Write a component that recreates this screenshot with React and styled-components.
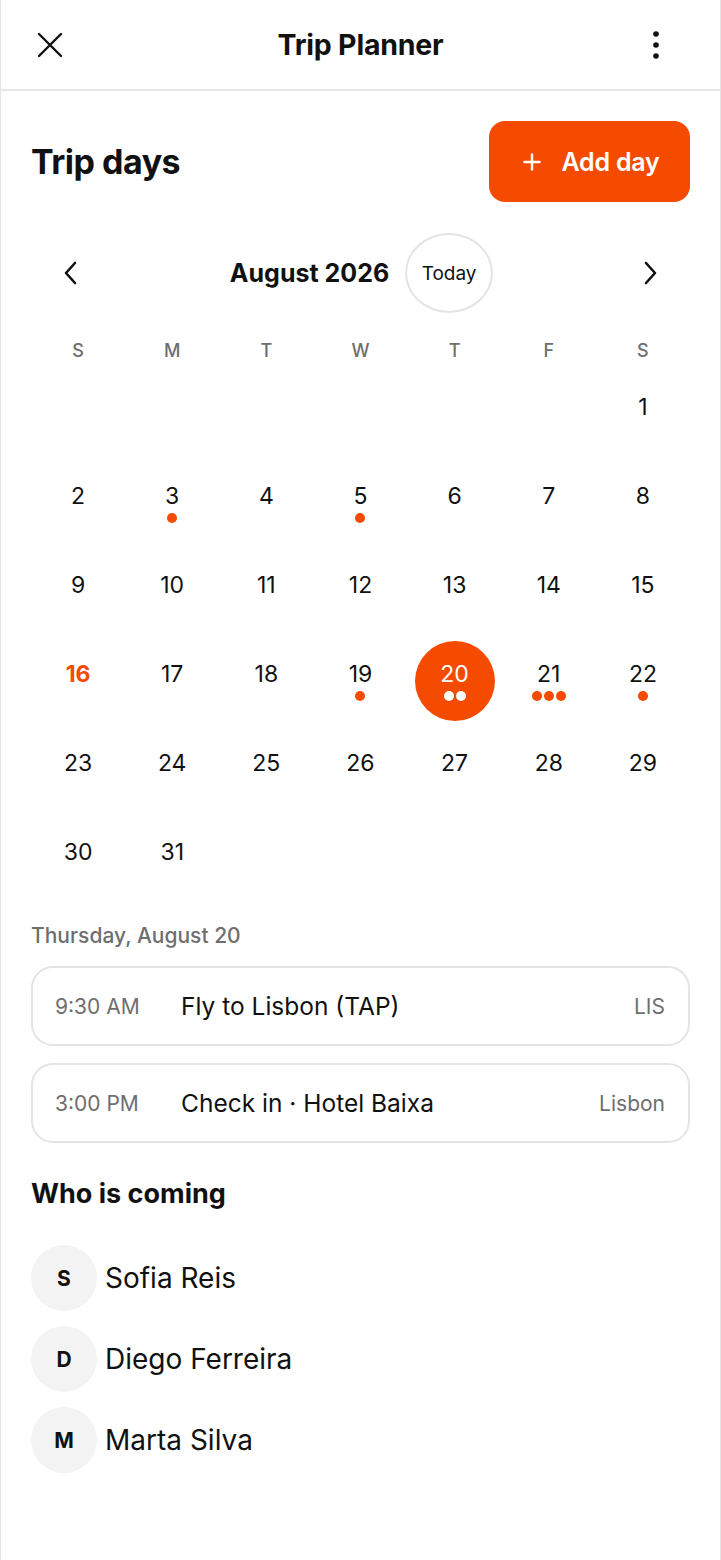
import React from 'react'
import styled, { createGlobalStyle } from 'styled-components'
import { Plus } from 'lucide-react'

const ORANGE = '#F44B00'

const GlobalStyle = createGlobalStyle`
  html, body {
    margin: 0;
    padding: 0;
    background: #fff;
  }
  body {
    font-family: Inter, "Noto Sans", "Liberation Sans", sans-serif;
    color: #111;
  }
`

const WEEKDAYS = ['S', 'M', 'T', 'W', 'T', 'F', 'S']
const EVENTS_PER_DAY = { 3: 1, 5: 1, 19: 1, 20: 2, 21: 3, 22: 1 }
const TODAY = 16
const SELECTED = 20

const schedule = [
  { time: '9:30 AM', title: 'Fly to Lisbon (TAP)', tag: 'LIS' },
  { time: '3:00 PM', title: 'Check in · Hotel Baixa', tag: 'Lisbon' },
]

const people = [
  { initial: 'S', name: 'Sofia Reis' },
  { initial: 'D', name: 'Diego Ferreira' },
  { initial: 'M', name: 'Marta Silva' },
]

const buildDays = () => {
  // August 2026 starts on a Saturday
  const cells = Array(6).fill(null)
  for (let d = 1; d <= 31; d++) cells.push(d)
  return cells
}

const CloseIcon = () => (
  <svg width="26" height="26" viewBox="0 0 26 26" fill="none" stroke="#111" strokeWidth="2.4" strokeLinecap="round">
    <path d="M2 2 L24 24 M24 2 L2 24" />
  </svg>
)

const KebabIcon = () => (
  <svg width="24" height="30" viewBox="0 0 24 30" fill="#111">
    <circle cx="12" cy="4" r="2.8" />
    <circle cx="12" cy="15" r="2.8" />
    <circle cx="12" cy="26" r="2.8" />
  </svg>
)

const Chevron = ({ dir }) => (
  <svg width="16" height="24" viewBox="0 0 16 24" fill="none" stroke="#111" strokeWidth="2.6" strokeLinecap="round" strokeLinejoin="round">
    <path d={dir === 'left' ? 'M12 2 L3 12 L12 22' : 'M4 2 L13 12 L4 22'} />
  </svg>
)

const App = () => {
  const days = buildDays()
  return (
    <>
      <GlobalStyle />
      <Page>
        <TopBar>
          <IconButton aria-label="Close"><CloseIcon /></IconButton>
          <TopTitle>Trip Planner</TopTitle>
          <IconButton aria-label="More" end><KebabIcon /></IconButton>
        </TopBar>

        <Content>
          <TitleRow>
            <PageTitle>Trip days</PageTitle>
            <AddButton>
              <Plus size={26} strokeWidth={2.2} />
              Add day
            </AddButton>
          </TitleRow>

          <MonthNav>
            <NavArrow aria-label="Previous month"><Chevron dir="left" /></NavArrow>
            <MonthGroup>
              <MonthLabel>August 2026</MonthLabel>
              <TodayButton>Today</TodayButton>
            </MonthGroup>
            <NavArrow aria-label="Next month"><Chevron dir="right" /></NavArrow>
          </MonthNav>

          <WeekRow>
            {WEEKDAYS.map((w, i) => <WeekLabel key={i}>{w}</WeekLabel>)}
          </WeekRow>

          <DayGrid>
            {days.map((d, i) => (
              <DayCell key={i}>
                {d && (
                  <DayCircle selected={d === SELECTED}>
                    <DayNumber today={d === TODAY} selected={d === SELECTED}>{d}</DayNumber>
                    <Dots>
                      {Array.from({ length: EVENTS_PER_DAY[d] || 0 }).map((_, j) => (
                        <Dot key={j} light={d === SELECTED} />
                      ))}
                    </Dots>
                  </DayCircle>
                )}
              </DayCell>
            ))}
          </DayGrid>

          <DayHeading>Thursday, August 20</DayHeading>
          <EventList>
            {schedule.map(ev => (
              <EventCard key={ev.time}>
                <EventTime>{ev.time}</EventTime>
                <EventTitle>{ev.title}</EventTitle>
                <EventTag>{ev.tag}</EventTag>
              </EventCard>
            ))}
          </EventList>

          <SectionTitle>Who is coming</SectionTitle>
          <PeopleList>
            {people.map(p => (
              <Person key={p.name}>
                <Avatar>{p.initial}</Avatar>
                <PersonName>{p.name}</PersonName>
              </Person>
            ))}
          </PeopleList>
        </Content>
      </Page>
    </>
  )
}

const Page = styled.div`
  box-sizing: border-box;
  width: 721px;
  min-height: 1560px;
  border-left: 1px solid #e4e4e4;
  border-right: 1px solid #e4e4e4;
  background: #fff;
`

const TopBar = styled.header`
  height: 89px;
  display: grid;
  grid-template-columns: 1fr auto 1fr;
  align-items: center;
  padding: 0 49px 0 34px;
  border-bottom: 2px solid #e6e6e6;
`

const IconButton = styled.button`
  justify-self: ${p => (p.end ? 'end' : 'start')};
  width: 30px;
  height: 30px;
  padding: 0;
  border: none;
  background: none;
  color: #111;
  display: flex;
  align-items: center;
  justify-content: center;
`

const TopTitle = styled.h1`
  margin: 0 0 0 15px;
  font-size: 28.5px;
  font-weight: 700;
  letter-spacing: -0.2px;
`

const Content = styled.main`
  padding: 30px 30px 40px;
`

const TitleRow = styled.div`
  display: flex;
  align-items: center;
  justify-content: space-between;
`

const PageTitle = styled.h2`
  margin: 0;
  font-size: 34px;
  font-weight: 700;
  letter-spacing: -0.5px;
`

const AddButton = styled.button`
  box-sizing: border-box;
  width: 201px;
  height: 81px;
  border: none;
  border-radius: 16px;
  background: ${ORANGE};
  color: #fff;
  font-family: inherit;
  font-size: 25px;
  font-weight: 600;
  display: flex;
  align-items: center;
  justify-content: center;
  gap: 16px;
  letter-spacing: -0.2px;
`

const MonthNav = styled.div`
  margin-top: 31px;
  height: 80px;
  display: flex;
  align-items: center;
  justify-content: space-between;
  padding: 0 32px 0 32px;
`

const NavArrow = styled.button`
  padding: 0;
  border: none;
  background: none;
  color: #111;
  display: flex;
`

const MonthGroup = styled.div`
  display: flex;
  align-items: center;
  gap: 16px;
  margin-left: 2px;
`

const MonthLabel = styled.span`
  font-size: 25px;
  font-weight: 700;
`

const TodayButton = styled.button`
  width: 88px;
  height: 80px;
  border-radius: 50%;
  border: 2px solid #e4e4e4;
  background: #fff;
  font-family: inherit;
  font-size: 19px;
  color: #111;
  padding: 0;
`

const WeekRow = styled.div`
  margin-top: 22px;
  display: grid;
  grid-template-columns: repeat(7, 1fr);
  height: 30px;
  align-items: center;
`

const WeekLabel = styled.span`
  text-align: center;
  font-size: 18px;
  font-weight: 500;
  color: #6e6e6e;
`

const DayGrid = styled.div`
  margin-top: 9px;
  display: grid;
  grid-template-columns: repeat(7, 1fr);
  grid-auto-rows: 80px;
  row-gap: 9px;
`

const DayCell = styled.div`
  display: flex;
  justify-content: center;
`

const DayCircle = styled.div`
  width: 80px;
  height: 80px;
  border-radius: 50%;
  background: ${p => (p.selected ? ORANGE : 'transparent')};
  display: flex;
  flex-direction: column;
  align-items: center;
  justify-content: center;
  gap: 4px;
`

const DayNumber = styled.span`
  height: 26px;
  line-height: 26px;
  font-size: 23px;
  font-weight: ${p => (p.today ? 700 : 400)};
  color: ${p => (p.selected ? '#fff' : p.today ? ORANGE : '#111')};
`

const Dots = styled.div`
  height: 10px;
  display: flex;
  gap: 2px;
`

const Dot = styled.span`
  width: 10px;
  height: 10px;
  border-radius: 50%;
  background: ${p => (p.light ? '#fff' : ORANGE)};
`

const DayHeading = styled.div`
  margin-top: 24px;
  font-size: 21px;
  font-weight: 500;
  color: #6e6e6e;
`

const EventList = styled.div`
  margin-top: 18px;
  display: flex;
  flex-direction: column;
  gap: 17px;
`

const EventCard = styled.div`
  box-sizing: border-box;
  height: 80px;
  border: 2px solid #e4e4e4;
  border-radius: 22px;
  padding: 0 23px 0 22px;
  display: flex;
  align-items: center;
`

const EventTime = styled.span`
  width: 126px;
  flex-shrink: 0;
  font-size: 21px;
  color: #6e6e6e;
`

const EventTitle = styled.span`
  flex: 1;
  font-size: 24.5px;
  color: #111;
`

const EventTag = styled.span`
  font-size: 21px;
  color: #6e6e6e;
`

const SectionTitle = styled.h3`
  margin: 34px 0 0;
  font-size: 27px;
  font-weight: 700;
`

const PeopleList = styled.div`
  margin-top: 35px;
  display: flex;
  flex-direction: column;
  gap: 15px;
`

const Person = styled.div`
  display: flex;
  align-items: center;
  gap: 8px;
`

const Avatar = styled.div`
  width: 66px;
  height: 66px;
  border-radius: 50%;
  background: #f3f3f3;
  display: flex;
  align-items: center;
  justify-content: center;
  font-size: 21px;
  font-weight: 700;
`

const PersonName = styled.span`
  font-size: 28px;
  color: #111;
`

export default App
